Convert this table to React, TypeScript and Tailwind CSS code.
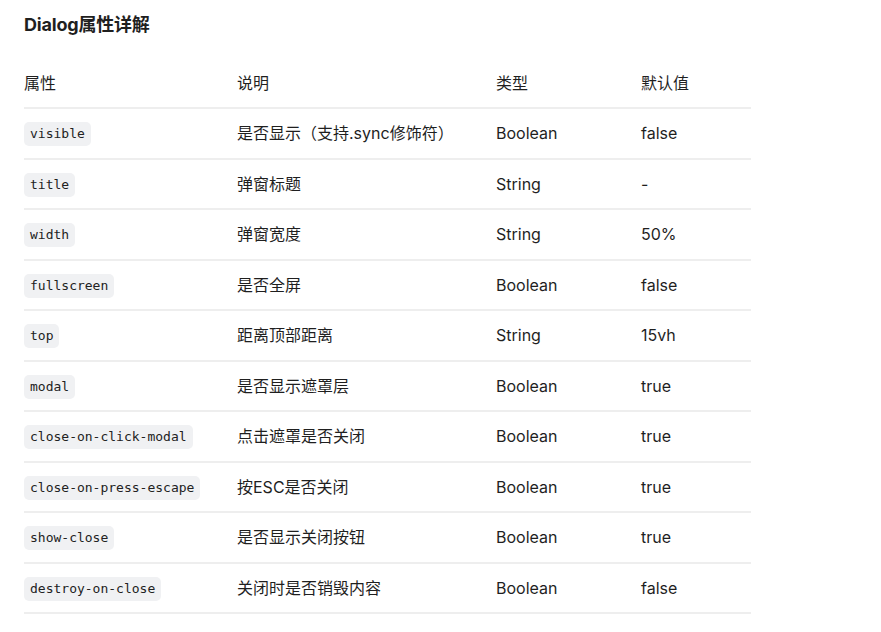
import React from "react";

const rows: [string, string, string, string][] = [
  ["visible", "是否显示（支持.sync修饰符）", "Boolean", "false"],
  ["title", "弹窗标题", "String", "-"],
  ["width", "弹窗宽度", "String", "50%"],
  ["fullscreen", "是否全屏", "Boolean", "false"],
  ["top", "距离顶部距离", "String", "15vh"],
  ["modal", "是否显示遮罩层", "Boolean", "true"],
  ["close-on-click-modal", "点击遮罩是否关闭", "Boolean", "true"],
  ["close-on-press-escape", "按ESC是否关闭", "Boolean", "true"],
  ["show-close", "是否显示关闭按钮", "Boolean", "true"],
  ["destroy-on-close", "关闭时是否销毁内容", "Boolean", "false"],
];

export default function App() {
  return (
    <div
      className="min-h-screen bg-white px-6 pt-[13px] text-[#1f1f1f]"
      style={{ fontFamily: 'Inter, "Noto Sans CJK SC", sans-serif' }}
    >
      <h2 className="h-6 text-[18px] font-bold leading-6 tracking-[-0.2px]">Dialog属性详解</h2>
      <div className="mt-[21px] w-[727px]">
        <div className="flex h-[51px] items-center border-b-2 border-[#eeeeee] text-[16px]">
          <div className="w-[213px]">属性</div>
          <div className="w-[259px]">说明</div>
          <div className="w-[145px]">类型</div>
          <div className="flex-1">默认值</div>
        </div>
        {rows.map(([name, desc, type, def]) => (
          <div
            key={name}
            className="flex h-[50.5px] items-center border-b-2 border-[#eeeeee] text-[16px]"
          >
            <div className="w-[213px]">
              <code
                className="inline-block rounded-[5px] bg-[#f0f1f3] px-1.5 py-1 text-[13px] leading-4 text-[#222]"
                style={{ fontFamily: '"DejaVu Sans Mono", monospace' }}
              >
                {name}
              </code>
            </div>
            <div className="w-[259px]">{desc}</div>
            <div className="w-[145px]">{type}</div>
            <div className="flex-1">{def}</div>
          </div>
        ))}
      </div>
    </div>
  );
}
